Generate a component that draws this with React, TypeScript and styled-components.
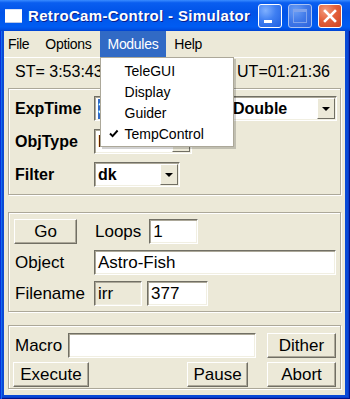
import React from "react";
import styled, { createGlobalStyle } from "styled-components";

const GlobalStyle = createGlobalStyle`
  html, body {
    margin: 0;
    padding: 0;
    background: #0a4ad6;
  }
  body {
    font-family: "Liberation Sans", Arial, sans-serif;
  }
  * {
    box-sizing: border-box;
  }
`;

function CaptionGlyph({ kind }: { kind: "min" | "max" | "close" }) {
  if (kind === "min") {
    return (
      <svg width="22" height="22" viewBox="0 0 22 22">
        <rect x="5" y="15" width="8" height="3" fill="#fff" />
      </svg>
    );
  }
  if (kind === "max") {
    return (
      <svg width="22" height="22" viewBox="0 0 22 22">
        <rect x="4.5" y="4.5" width="13" height="13" fill="none" stroke="#7ea2ec" strokeWidth="1" />
        <rect x="4" y="4" width="14" height="3" fill="#7ea2ec" />
      </svg>
    );
  }
  return (
    <svg width="22" height="22" viewBox="0 0 22 22">
      <path d="M6 6 L16 16 M16 6 L6 16" stroke="#fff" strokeWidth="2.6" strokeLinecap="square" />
    </svg>
  );
}

function Check() {
  return (
    <svg width="10" height="9" viewBox="0 0 10 9">
      <polyline points="1,4.5 3.6,7.2 8.6,1.5" fill="none" stroke="#000" strokeWidth="1.9" />
    </svg>
  );
}

function App() {
  return (
    <>
      <GlobalStyle />
      <Window>
        <TitleBar>
          <svg width="17" height="14" viewBox="0 0 17 14">
            <rect x="0" y="0" width="17" height="14" fill="#fff" />
            <rect x="0" y="0" width="17" height="1" fill="#d9e4f8" />
            <rect x="0" y="13" width="17" height="1" fill="#b9c8e6" />
          </svg>
          <TitleText>RetroCam-Control - Simulator</TitleText>
          <CaptionButtons>
            <CaptionButton $kind="min">
              <CaptionGlyph kind="min" />
            </CaptionButton>
            <CaptionButton $kind="max">
              <CaptionGlyph kind="max" />
            </CaptionButton>
            <CaptionButton $kind="close">
              <CaptionGlyph kind="close" />
            </CaptionButton>
          </CaptionButtons>
        </TitleBar>

        <Frame>
          <Client>
            <MenuBar>
              <MenuItem>File</MenuItem>
              <MenuItem>Options</MenuItem>
              <MenuItem $active>
                Modules
                <Dropdown>
                  <DropItem>
                    <CheckSlot />
                    TeleGUI
                  </DropItem>
                  <DropItem>
                    <CheckSlot />
                    Display
                  </DropItem>
                  <DropItem>
                    <CheckSlot />
                    Guider
                  </DropItem>
                  <DropItem>
                    <CheckSlot>
                      <Check />
                    </CheckSlot>
                    TempControl
                  </DropItem>
                </Dropdown>
              </MenuItem>
              <MenuItem>Help</MenuItem>
            </MenuBar>

            <StatusRow>
              <span>ST= 3:53:43</span>
              <span>UT=01:21:36</span>
            </StatusRow>

            <Group $top={2}>
              <SetupGrid>
                <BoldLabel>ExpTime</BoldLabel>
                <Inline>
                  <Field $width={56} $bold>
                    <Selected>30</Selected>
                  </Field>
                  <Combo $width={108} $bold $push>
                    Double
                    <ComboArrow />
                  </Combo>
                </Inline>
                <BoldLabel>ObjType</BoldLabel>
                <Combo $width={98} $bold>
                  Dark
                  <ComboArrow />
                </Combo>
                <BoldLabel>Filter</BoldLabel>
                <Combo $width={86} $bold>
                  dk
                  <ComboArrow />
                </Combo>
              </SetupGrid>
            </Group>

            <Group $top={17}>
              <RunGrid>
                <Button $width={63}>Go</Button>
                <Inline $gap={8}>
                  <Label>Loops</Label>
                  <Field $width={49}>1</Field>
                </Inline>
                <Label>Object</Label>
                <Field>Astro-Fish</Field>
                <Label>Filename</Label>
                <Inline $gap={5}>
                  <Field $width={48} $readOnly>
                    irr
                  </Field>
                  <Field $width={61}>377</Field>
                </Inline>
              </RunGrid>
            </Group>

            <Group $top={13}>
              <MacroPanel>
                <MacroRow>
                  <Label>Macro</Label>
                  <Field $width={188} />
                  <Button $width={69} $push>
                    Dither
                  </Button>
                </MacroRow>
                <MacroRow>
                  <Button $width={76}>Execute</Button>
                  <Button $width={61} $push>
                    Pause
                  </Button>
                  <Button $width={69} $gapLeft={19}>
                    Abort
                  </Button>
                </MacroRow>
              </MacroPanel>
            </Group>
          </Client>
        </Frame>
      </Window>
    </>
  );
}

export default App;

const Window = styled.div`
  display: flex;
  flex-direction: column;
  width: 350px;
  height: 399px;
  overflow: hidden;
`;

const TitleBar = styled.div`
  display: flex;
  align-items: center;
  height: 31px;
  padding: 0 8px 0 5px;
  background: linear-gradient(
    180deg,
    #3a8cff 0%,
    #0a5ef0 9%,
    #0053e8 40%,
    #005cf2 86%,
    #0052e6 94%,
    #0042d0 100%
  );
`;

const TitleText = styled.span`
  flex: 1;
  margin-left: 6px;
  color: #fff;
  font-size: 15px;
  font-weight: bold;
  letter-spacing: 0.35px;
  text-shadow: 1px 1px 0 #0a1e8c;
  white-space: nowrap;
`;

const CaptionButtons = styled.div`
  display: flex;
  gap: 6px;
`;

const captionBackgrounds = {
  min: "radial-gradient(circle at 30% 25%, #7fb0ff 0%, #3f7ff2 45%, #1f5fe0 100%)",
  max: "radial-gradient(circle at 30% 25%, #6a9ef6 0%, #3f78e8 50%, #2c62dc 100%)",
  close: "radial-gradient(circle at 30% 25%, #f39a7c 0%, #e4613b 45%, #cf4320 100%)",
};

const CaptionButton = styled.div<{ $kind: "min" | "max" | "close" }>`
  display: flex;
  align-items: center;
  justify-content: center;
  width: 24px;
  height: 24px;
  border: 1px solid ${({ $kind }) => ($kind === "max" ? "#a9c2f2" : "#fff")};
  border-radius: 3px;
  background: ${({ $kind }) => captionBackgrounds[$kind]};
`;

const Frame = styled.div`
  flex: 1;
  display: flex;
  padding: 0 5px 4px 4px;
  background: #0a4ad6;
  box-shadow: inset 1px 0 #0831d9, inset 2px 0 #166aee, inset -1px -1px #00138c,
    inset -2px -2px #0a3cc8;
`;

const Client = styled.div`
  flex: 1;
  display: flex;
  flex-direction: column;
  background: #ece9d8;
  color: #000;
`;

const MenuBar = styled.div`
  display: flex;
  height: 27px;
  border-bottom: 1px solid #fff;
  font-size: 14px;
  letter-spacing: -0.3px;
`;

const MenuItem = styled.div<{ $active?: boolean }>`
  position: relative;
  display: flex;
  align-items: center;
  padding: 0 8px;
  color: ${({ $active }) => ($active ? "#fff" : "#000")};
  background: ${({ $active }) => ($active ? "#316ac5" : "transparent")};

  &:first-child {
    padding-left: 4px;
  }
`;

const Dropdown = styled.div`
  position: absolute;
  top: 100%;
  left: 0;
  z-index: 10;
  width: 134px;
  padding: 2px 0;
  background: #fff;
  border: 1px solid #aca899;
  box-shadow: 2px 2px 0 rgba(0, 0, 0, 0.18);
  letter-spacing: 0;
`;

const DropItem = styled.div`
  display: flex;
  align-items: center;
  height: 21px;
  color: #000;
  font-size: 14px;
`;

const CheckSlot = styled.span`
  display: flex;
  align-items: center;
  width: 24px;
  padding-left: 8px;
`;

const StatusRow = styled.div`
  display: flex;
  align-items: center;
  justify-content: space-between;
  height: 28px;
  padding: 0 15px 0 11px;
  font-size: 16px;
`;

const Group = styled.div<{ $top: number }>`
  margin: ${({ $top }) => $top}px 4px 0 4px;
  border: 1px solid #aca899;
  box-shadow: inset 1px 1px 0 #fff, 1px 1px 0 #fff;
`;

const SetupGrid = styled.div`
  display: grid;
  grid-template-columns: 79px 1fr;
  grid-template-rows: repeat(3, 25px);
  row-gap: 8px;
  align-items: center;
  padding: 7px 3px 7px 6px;
`;

const RunGrid = styled.div`
  display: grid;
  grid-template-columns: 80px 1fr;
  grid-template-rows: repeat(3, 25px);
  row-gap: 6px;
  align-items: center;
  padding: 6px 4px 5px 5px;
`;

const MacroPanel = styled.div`
  display: flex;
  flex-direction: column;
  gap: 4px;
  padding: 7px 4px 1px 4px;
`;

const MacroRow = styled.div`
  display: flex;
  align-items: center;
  gap: 6px;
`;

const Inline = styled.div<{ $gap?: number }>`
  display: flex;
  align-items: center;
  gap: ${({ $gap }) => $gap ?? 0}px;
`;

const BoldLabel = styled.span`
  font-size: 16px;
  font-weight: bold;
`;

const Label = styled.span`
  margin-left: 1px;
  font-size: 17px;
  white-space: nowrap;

  ${MacroRow} > & {
    margin-left: 2px;
  }
`;

const Field = styled.div<{ $width?: number; $readOnly?: boolean; $bold?: boolean; $push?: boolean }>`
  display: flex;
  align-items: center;
  width: ${({ $width }) => ($width ? `${$width}px` : "100%")};
  height: 25px;
  margin-left: ${({ $push }) => ($push ? "auto" : "0")};
  padding: 0 3px;
  background: ${({ $readOnly }) => ($readOnly ? "#ece9d8" : "#fff")};
  border: 1px solid;
  border-color: #716f64 #fff #fff #716f64;
  box-shadow: inset 1px 1px 0 #aca899, inset -1px -1px 0 #f1efe2;
  font-size: ${({ $bold }) => ($bold ? "16px" : "17px")};
  font-weight: ${({ $bold }) => ($bold ? "bold" : "normal")};
  white-space: nowrap;
  overflow: hidden;
`;

const Combo = styled(Field)`
  justify-content: space-between;
  padding-right: 1px;
`;

const ComboArrow = styled.span`
  display: flex;
  flex-shrink: 0;
  align-items: center;
  justify-content: center;
  width: 18px;
  height: 21px;
  background: #ece9d8;
  border: 1px solid;
  border-color: #fff #716f64 #716f64 #fff;

  &::after {
    content: "";
    border-left: 4px solid transparent;
    border-right: 4px solid transparent;
    border-top: 4px solid #000;
  }
`;

const Selected = styled.span`
  color: #fff;
  background: #316ac5;
  line-height: 20px;
`;

const Button = styled.button<{ $width: number; $push?: boolean; $gapLeft?: number }>`
  flex-shrink: 0;
  width: ${({ $width }) => $width}px;
  height: 25px;
  margin-left: ${({ $push, $gapLeft }) => ($push ? "auto" : `${($gapLeft ?? 6) - 6}px`)};
  padding: 0;
  color: #000;
  background: #ece9d8;
  border: 1px solid;
  border-color: #fff #716f64 #716f64 #fff;
  box-shadow: inset -1px -1px 0 #aca899;
  font-family: "Liberation Sans", Arial, sans-serif;
  font-size: 17px;
`;
